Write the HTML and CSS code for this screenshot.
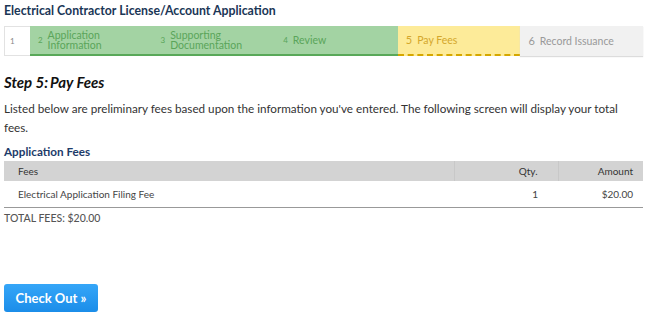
FILE: index.html
```html
<!DOCTYPE html>
<html lang="en">
<head>
    <meta charset="UTF-8">
    <title>Electrical Contractor License/Account Application</title>
    <link rel="stylesheet" href="styles.css">
</head>
<body>
    <div class="page">
        <div class="app-title">Electrical Contractor License/Account Application</div>

        <div class="steps">
            <div class="step step-first"><span class="num">1</span></div>
            <div class="step step-done"><span class="num">2</span><span class="label">Application<br>Information</span></div>
            <div class="step step-done"><span class="num">3</span><span class="label">Supporting<br>Documentation</span></div>
            <div class="step step-done"><span class="num">4</span><span class="label">Review</span></div>
            <div class="step step-current"><span class="num">5</span><span class="label">Pay Fees</span></div>
            <div class="step step-next"><span class="num big">6</span><span class="label">Record Issuance</span></div>
        </div>

        <h2 class="step-title">Step 5:<span>Pay Fees</span></h2>
        <p class="intro">Listed below are preliminary fees based upon the information you've entered. The following screen will display your total fees.</p>

        <div class="section-title">Application Fees</div>
        <table class="fees">
            <thead>
                <tr>
                    <th class="col-name">Fees</th>
                    <th class="col-qty">Qty.</th>
                    <th class="col-amount">Amount</th>
                </tr>
            </thead>
            <tbody>
                <tr>
                    <td class="col-name">Electrical Application Filing Fee</td>
                    <td class="col-qty">1</td>
                    <td class="col-amount">$20.00</td>
                </tr>
            </tbody>
        </table>
        <div class="total">TOTAL FEES: $20.00</div>

        <button class="checkout-btn" type="button">Check Out &raquo;</button>
    </div>
</body>
</html>
```

FILE: styles.css
```css
* {
    margin: 0;
    padding: 0;
    box-sizing: border-box;
}

body {
    background: white;
    font-family: Lato, 'Open Sans', sans-serif;
    color: #333;
}

.page {
    width: 643px;
    padding: 3px 0 0 4px;
}

.app-title {
    font-size: 12.3px;
    font-weight: 700;
    color: #1a3656;
    line-height: 16px;
}

/* step bar */
.steps {
    display: flex;
    margin-top: 7px;
    height: 30px;
}

.step {
    display: flex;
    align-items: center;
    width: 123px;
    padding-left: 8px;
    font-size: 10.5px;
    line-height: 10.5px;
}

.step .num {
    font-size: 8px;
    margin-right: 5px;
}

.step .num.big {
    font-size: 11px;
}

.step-first {
    width: 26px;
    padding-left: 5px;
    border: 1px solid #e2e2e2;
    border-right: none;
    color: #888;
}

.step-done {
    background: #a3d3a3;
    color: #5aa55a;
    border-bottom: 2px solid #59a859;
}

.step-current {
    background: #fdeb99;
    color: #d4a72c;
    border-bottom: 2px dashed #d5a700;
}

.step-current .num {
    font-size: 11px;
}

.step-next {
    background: #f1f1f1;
    color: #999;
    box-shadow: 0 1px 1px #dcdcdc;
}

/* content */
.step-title {
    margin-top: 17px;
    font-size: 15px;
    font-weight: 700;
    font-style: italic;
    color: #111;
}

.step-title span {
    margin-left: 2px;
}

.intro {
    margin-top: 8px;
    font-size: 11.7px;
    line-height: 19px;
    color: #333;
}

.section-title {
    margin-top: 7px;
    margin-bottom: 2px;
    font-size: 11.7px;
    font-weight: 700;
    color: #1d3b69;
    line-height: 15px;
}

.fees {
    width: 639px;
    border-collapse: collapse;
    font-size: 10px;
}

.fees th {
    background: #d3d3d3;
    font-weight: 400;
    height: 20px;
    color: #333;
    border-left: 1px solid #c8c8c8;
}

.fees th:first-child {
    border-left: none;
}

.fees td {
    height: 26px;
    border-bottom: 1px solid #999;
    color: #444;
}

.col-name {
    text-align: left;
    padding-left: 14px;
}

.col-qty {
    width: 104px;
    text-align: right;
    padding-right: 20px;
}

.col-amount {
    width: 85px;
    text-align: right;
    padding-right: 10px;
}

.total {
    margin-top: 3px;
    font-size: 10.5px;
    font-weight: 500;
    color: #555;
    line-height: 14px;
}

.checkout-btn {
    margin-top: 59px;
    width: 94px;
    height: 28px;
    border: none;
    border-radius: 3px;
    background: linear-gradient(#35a6f8, #1b8de9);
    color: white;
    font-family: Lato, sans-serif;
    font-size: 13px;
    font-weight: 700;
}
```
